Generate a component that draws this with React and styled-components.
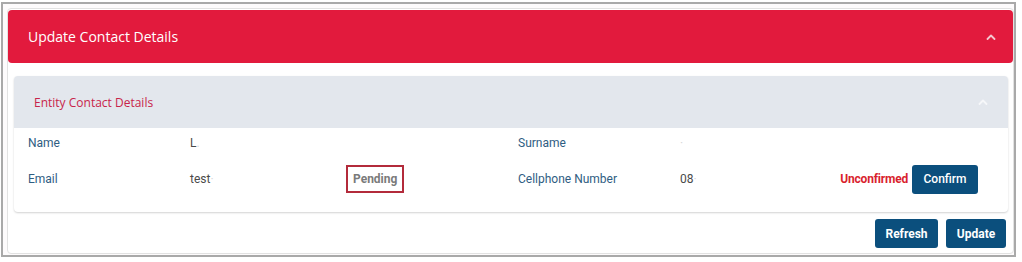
import styled, { createGlobalStyle } from 'styled-components'

const GlobalStyle = createGlobalStyle`
  html, body {
    margin: 0;
    padding: 0;
    background: #ffffff;
  }
  body {
    font-family: Roboto, "Liberation Sans", Arial, sans-serif;
    font-size: 12px;
  }
`

const Frame = styled.div`
  box-sizing: border-box;
  width: 1015px;
  height: 255px;
  margin: 2px 0 0 1px;
  border: 2px solid #a9a9a9;
  padding: 4px 0 0 4px;
  background: #fdfbfc;
`

const Card = styled.div`
  box-sizing: border-box;
  width: 1007px;
  height: 246px;
  border: 1px solid #e2e2e2;
  border-radius: 4px;
  padding: 1px 0 0 0;
  background: #ffffff;
  display: flex;
  flex-direction: column;
`

const MainHeader = styled.div`
  height: 53px;
  background: #e21a3d;
  border-radius: 4px;
  display: flex;
  align-items: center;
  justify-content: space-between;
  padding: 0 17px 0 20px;
  color: #ffffff;
  font-family: "Open Sans", "Noto Sans", sans-serif;
  font-size: 14px;
`

const Panel = styled.div`
  margin: 13px 5px 0 6px;
  border-radius: 4px;
  background: #ffffff;
  box-shadow: 0 1px 2px rgba(0, 0, 0, 0.18);
`

const PanelHeader = styled.div`
  height: 52px;
  background: #e3e7ed;
  border-radius: 4px 4px 0 0;
  display: flex;
  align-items: center;
  justify-content: space-between;
  padding: 0 20px 0 20px;
  color: #c8244a;
  font-family: "Open Sans", "Noto Sans", sans-serif;
  font-size: 12px;
`

const PanelBody = styled.div`
  display: grid;
  grid-template-columns: 162px 156px 172px 162px 1fr auto;
  grid-auto-rows: 30px;
  row-gap: 6px;
  align-items: center;
  padding: 0 30px 18px 14px;
`

const Label = styled.div`
  color: #2f5d82;
`

const Value = styled.div`
  color: #4a4a4a;
`

const Faint = styled.span`
  color: #d8d8d8;
`

const PendingBadge = styled.div`
  justify-self: start;
  box-sizing: border-box;
  height: 28px;
  padding: 0 5px;
  border: 2px solid #b32b3b;
  display: flex;
  align-items: center;
  color: #7a7a7a;
  font-weight: 700;
`

const Actions = styled.div`
  display: flex;
  align-items: center;
  gap: 4px;
`

const Unconfirmed = styled.span`
  color: #d91f2e;
  font-weight: 700;
  letter-spacing: -0.2px;
`

const Button = styled.button`
  box-sizing: border-box;
  height: 29px;
  width: ${(p) => p.$w}px;
  border: none;
  border-radius: 3px;
  background: #0b4f7d;
  color: #ffffff;
  font-family: Roboto, "Liberation Sans", Arial, sans-serif;
  font-size: 12px;
  font-weight: ${(p) => (p.$bold ? 700 : 500)};
  cursor: pointer;
  padding: 0;
`

const Footer = styled.div`
  display: flex;
  justify-content: flex-end;
  gap: 8px;
  margin: 7px 7px 0 0;
`

function Caret({ color }) {
  return (
    <svg width="10" height="6" viewBox="0 0 10 6">
      <polyline
        points="1.5,5 5,1.5 8.5,5"
        fill="none"
        stroke={color}
        strokeWidth="1.8"
        strokeLinecap="round"
        strokeLinejoin="round"
      />
    </svg>
  )
}

export default function App() {
  return (
    <>
      <GlobalStyle />
      <Frame>
        <Card>
          <MainHeader>
            <span>Update Contact Details</span>
            <Caret color="#f4c6cf" />
          </MainHeader>
          <Panel>
            <PanelHeader>
              <span>Entity Contact Details</span>
              <Caret color="#f6f7f9" />
            </PanelHeader>
            <PanelBody>
              <Label>Name</Label>
              <Value>
                L<Faint>.</Faint>
              </Value>
              <div />
              <Label>Surname</Label>
              <Value>
                <Faint>·</Faint>
              </Value>
              <div />

              <Label>Email</Label>
              <Value>
                test<Faint>·</Faint>
              </Value>
              <PendingBadge>Pending</PendingBadge>
              <Label>Cellphone Number</Label>
              <Value>
                08<Faint>·</Faint>
              </Value>
              <Actions>
                <Unconfirmed>Unconfirmed</Unconfirmed>
                <Button $w={66}>Confirm</Button>
              </Actions>
            </PanelBody>
          </Panel>
          <Footer>
            <Button $w={63} $bold>Refresh</Button>
            <Button $w={60} $bold>Update</Button>
          </Footer>
        </Card>
      </Frame>
    </>
  )
}
